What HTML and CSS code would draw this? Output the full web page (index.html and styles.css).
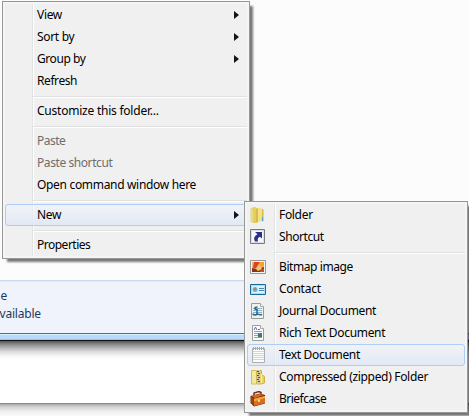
FILE: index.html
```
<!DOCTYPE html>
<html lang="en">
<head>
<meta charset="utf-8">
<title>Context menu</title>
<link rel="stylesheet" href="styles.css">
</head>
<body>
<main class="desktop">
  <section class="files"></section>
  <section class="details"><p class="none">ne</p><p class="avail">available</p></section>
  <div class="frame"></div>
  <section class="behind"></section>
  <section class="below"></section>
</main>

<nav class="menu main-menu">
  <div class="item"><span>View</span><i class="arrow"></i></div>
  <div class="item"><span>Sort by</span><i class="arrow"></i></div>
  <div class="item"><span class="snug">Group by</span><i class="arrow"></i></div>
  <div class="item"><span class="snug">Refresh</span></div>
  <hr>
  <div class="item"><span class="loose">Customize this folder...</span></div>
  <hr>
  <div class="item disabled"><span class="tight">Paste</span></div>
  <div class="item disabled"><span class="snug">Paste shortcut</span></div>
  <div class="item"><span>Open command window here</span></div>
  <hr>
  <div class="item hot"><span>New</span><i class="arrow"></i></div>
  <hr>
  <div class="item"><span class="tight">Properties</span></div>
</nav>

<nav class="menu sub-menu">
  <div class="item">
    <svg class="icon" viewBox="0 0 16 16"><defs><linearGradient id="gold"><stop offset="0" stop-color="#f8eda2"/><stop offset=".5" stop-color="#e3c955"/><stop offset="1" stop-color="#f7e791"/></linearGradient></defs><path d="M1 1.500l4-1 2 1V15l-2 1-4-1.500z" fill="url(#gold)" stroke="#d8bd5a" stroke-width=".6"/><path d="M7 1h5v13l-5 1.500z" fill="#f5e18a"/><path d="M5.500 2.500L8 1v14l-2.500 1z" fill="#d9bd4c"/><path d="M12 2l1.500.5v12L12 14z" fill="#d6b84b"/><path d="M12.500 10v4" stroke="#48a9d8" stroke-width="1.200"/></svg>
    <span>Folder</span></div>
  <div class="item">
    <svg class="icon" viewBox="0 0 16 16"><path d="M.5.500h14v14H.5z" fill="#f7f8fa" stroke="#777b80"/><path d="M1.500 1.500h12v12h-12z" fill="none" stroke="#dadde3"/><path d="M5 3h7v6.500L10 7.800c-2 .7-2.800 2.400-2 4.700H5C3.200 9.500 4.500 7 7.500 5.300z" fill="#28308b"/></svg>
    <span class="snug">Shortcut</span></div>
  <hr>
  <div class="item">
    <svg class="icon" viewBox="0 0 16 16"><path d="M.5 1.500h15v13H.5z" fill="#f3f3f3" stroke="#979797"/><path d="M2 3h12v10H2z" fill="#e8b88a"/><path d="M4 3h6L6 9H3z" fill="#e93f14"/><path d="M9 5l2-2h3v4l-2 1z" fill="#f4a31f"/><path d="M2 9l5 1 7-2v5H2z" fill="#8a3215"/><path d="M6 10l4-3 2 3-4 2z" fill="#f4cb5b"/><path d="M10 12l4-3v4h-4z" fill="#d9451d"/></svg>
    <span class="snug">Bitmap image</span></div>
  <div class="item">
    <svg class="icon" viewBox="0 0 16 16"><path d="M.5 3.500h15v10H.5z" fill="#d9f1fa" stroke="#126b9d"/><path d="M1.500 4.500h13v8h-13z" fill="none" stroke="#a9dff2"/><circle cx="5" cy="8.500" r="2.500" fill="#6fb3d0"/><circle cx="5" cy="8" r="1.200" fill="#a58b65"/><path d="M9 7.500h5M9 9.500h5" stroke="#4689af"/></svg>
    <span class="loose">Contact</span></div>
  <div class="item">
    <svg class="icon" viewBox="0 0 16 16"><path d="M1.500.500h9l3 3v12h-12z" fill="#f0f0ec" stroke="#989a99"/><path d="M10.500.500v3h3" fill="#fff" stroke="#aaa"/><path d="M3 5.500h9M3 7.500h9M3 9.500h9M3 11.500h9" stroke="#8eb5c9"/><path d="M7.500 4C4 4 4 6.500 7 6.500v4c0 2-4 2-4 0M7 10.500c1.500 1.500 3 1.500 5 1" fill="none" stroke="#246a93" stroke-width="1.500"/></svg>
    <span>Journal Document</span></div>
  <div class="item">
    <svg class="icon" viewBox="0 0 16 16"><path d="M2.500.500h8l3 3v12h-11z" fill="#fcfcfc" stroke="#9b9c9c"/><path d="M10.500.500v3h3" fill="#fff" stroke="#aaa"/><path d="M4 5l1.500-3L7 5M8 4.500h2" fill="none" stroke="#6b62d7"/><path d="M4 6.500h8M4 8.500h4M4 10.500h4M4 12.500h8" stroke="#8ca4ad"/><path d="M8 8h4v4H8z" fill="#387864"/><path d="M8 8h4v1.500H8z" fill="#4976bd"/></svg>
    <span>Rich Text Document</span></div>
  <div class="item hot">
    <svg class="icon" viewBox="0 0 16 16"><path d="M2.500 1.500h12v14h-12z" fill="#fbfdfd" stroke="#a9afb2"/><path d="M3 4.500h11M3 6.500h11M3 8.500h11M3 10.500h11M3 12.500h11" stroke="#c3dce1"/><path d="M3.500 0v3M5.500 0v3M7.500 0v3M9.500 0v3M11.500 0v3M13.500 0v3" stroke="#a4a7a9" stroke-dasharray="1 1"/></svg>
    <span>Text Document</span></div>
  <div class="item">
    <svg class="icon" viewBox="0 0 16 16"><path d="M1.500 1.500h5V15h-5z" fill="#f7e799" stroke="#d6bc52"/><path d="M7 1.500h4.500v4l3 2V14L11 15H7z" fill="#ead16b" stroke="#d0b348"/><path d="M11.500 5v9" stroke="#fff0a5"/><path d="M7 1h3v14H7z" fill="#c8c9b5"/><path d="M7 2.500h2M8 4.500h2M7 6.500h2M8 8.500h2M7 10.500h2M8 12.500h2" stroke="#46536b"/></svg>
    <span>Compressed (zipped) Folder</span></div>
  <div class="item">
    <svg class="icon" viewBox="0 0 16 16"><path d="M4 4V2l5-1.500 2 1V4" fill="none" stroke="#72300f" stroke-width="1.500"/><path d="M.5 5L10 2.500l5 1.500v8.500L4 15.500.5 12z" fill="#6b2b0d"/><path d="M1 5l9-2 4 1-9 3z" fill="#d46b20"/><path d="M3.500 7.500L15 5v7L4 15z" fill="#d96f1e"/><path d="M4 8l11-3v2L4 10.500z" fill="#f5a443"/><path d="M1 6l2.500 2v6L1 11.500z" fill="#9d4515"/><path d="M8 9l2-.5v2L8 11z" fill="#ffe39b"/></svg>
    <span class="tight">Briefcase</span></div>
</nav>
</body>
</html>
```
FILE: styles.css
```
* { box-sizing: border-box; }
body {
  margin: 0;
  width: 469px;
  height: 416px;
  overflow: hidden;
  position: relative;
  background: #fff;
  font: 12px/22px "Noto Sans", "Open Sans", sans-serif;
  color: #000;
}
.desktop { display: flex; flex-direction: column; height: 416px; }
.files { height: 280px; background: #fcfcfc; }
.details {
  height: 53px;
  padding-top: 7px;
  background: linear-gradient(#ccd9ea 0, #ccd9ea 1px, #e2eaf5 1px, #f0f3fb 3px, #f0f3fb);
  color: #1e395b;
  line-height: 18px;
}
.details p { margin: 0; width: 60px; white-space: nowrap; }
.none { text-indent: -7px; }
.avail { text-indent: -7px; letter-spacing: -0.2px; }
.frame {
  height: 8px;
  background: linear-gradient(#5b6b7c 0 1px, #d5f1fd 1px 2px, #b8d9fa 2px 6px, #76d5e8 6px 7px, #101316 7px);
}
.behind {
  height: 62px;
  background: linear-gradient(#555 0, #858585 3px, #b5b5b5 7px, #dedede 11px, #f7f7f7 15px, #fff 19px);
}
.below {
  flex: 1;
  border-top: 1px solid #8b8b8b;
  background: linear-gradient(#aaa, #d2d2d2 3px, #eee 7px, #fafafa);
}
.menu {
  position: absolute;
  padding: 2px;
  border: 1px solid #979797;
  background: linear-gradient(90deg, transparent 29px, #e2e3e3 29px 30px, #fff 30px 31px, transparent 31px) 0 2px / 100% calc(100% - 4px) no-repeat, #f0f0f0;
  box-shadow: inset 0 0 0 2px #f5f5f5, 4px 4px 2px -1px rgba(0, 0, 0, .52);
}
.main-menu { left: 2px; top: 1px; width: 248px; }
.sub-menu { left: 244px; top: 201px; width: 224px; }
.item {
  position: relative;
  display: flex;
  align-items: center;
  height: 22px;
  padding-left: 32px;
  white-space: nowrap;
}
.item span { position: relative; letter-spacing: -0.32px; }
.item .loose { letter-spacing: -0.23px; }
.item .snug { letter-spacing: -0.42px; }
.item .tight { letter-spacing: -0.5px; }
.disabled { color: #6d6d6d; }
.hot::before {
  content: "";
  position: absolute;
  inset: 0;
  border: 1px solid #aeccf5;
  border-radius: 3px;
  background: linear-gradient(rgba(240, 244, 250, .65), rgba(218, 230, 248, .65));
}
.arrow {
  position: relative;
  margin-left: auto;
  margin-right: 8px;
  border: 4px solid transparent;
  border-left: 5px solid #151515;
  border-right: 0;
}
.icon { position: relative; width: 16px; height: 16px; margin-left: -29px; margin-right: 13px; }
.menu hr {
  height: 2px;
  margin: 4px 0 2px 28px;
  border: 0;
  background: linear-gradient(#e0e0e0 50%, #fff 50%);
}
```
